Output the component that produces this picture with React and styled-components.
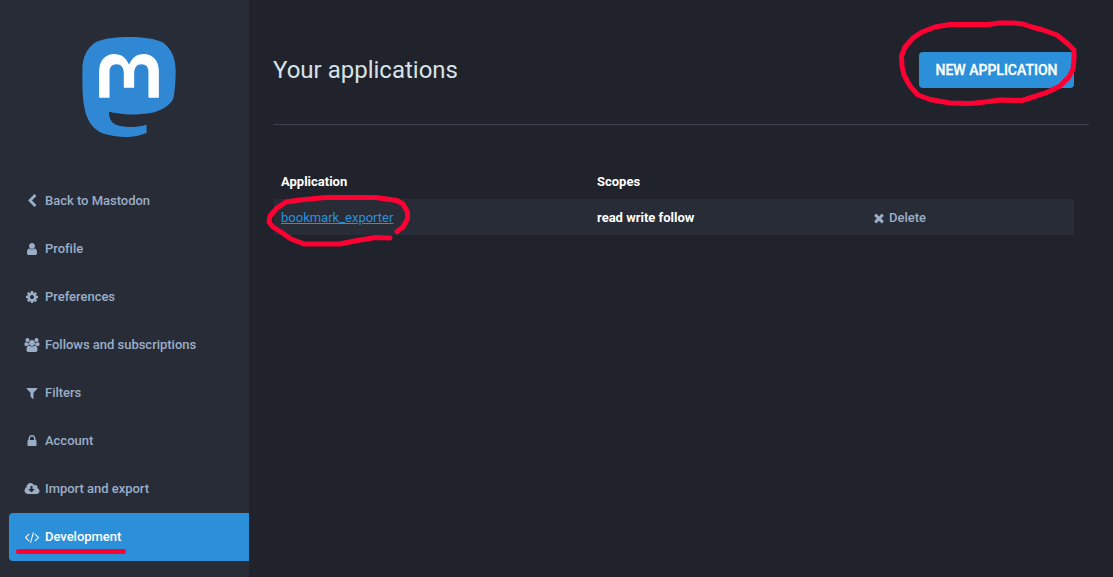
import React from "react";
import styled, { createGlobalStyle } from "styled-components";

const GlobalStyle = createGlobalStyle`
  * {
    box-sizing: border-box;
  }
  body {
    margin: 0;
    background: #20232b;
    font-family: Roboto, "Liberation Sans", sans-serif;
    font-size: 13px;
    line-height: 18px;
    color: #fff;
  }
`;

const Layout = styled.div`
  position: relative;
  display: flex;
  width: 1113px;
  height: 577px;
  overflow: hidden;
`;

const Sidebar = styled.aside`
  width: 249px;
  flex-shrink: 0;
  padding-top: 37px;
  background: #282c37;
`;

const Logo = styled.svg`
  display: block;
  width: 94px;
  height: 100px;
  margin: 0 auto 40px 82px;
`;

const Nav = styled.nav`
  display: flex;
  flex-direction: column;
  padding-left: 9px;
`;

const NavItem = styled.a`
  display: flex;
  align-items: center;
  gap: 6px;
  height: 48px;
  padding: 0 16px;
  border-radius: 4px 0 0 4px;
  font-weight: 500;
  letter-spacing: -0.02px;
  text-decoration: none;
  color: ${(props) => (props.$active ? "#fff" : "#9baec8")};
  background: ${(props) => (props.$active ? "#2b90d9" : "transparent")};
`;

const IconSvg = styled.svg`
  display: block;
  width: 14px;
  height: 14px;
  margin-bottom: 1px;
  flex-shrink: 0;
  overflow: visible;
  fill: currentColor;
`;

const Content = styled.main`
  flex: 1;
  padding: 52px 24px 0 25px;
`;

const Header = styled.header`
  display: flex;
  justify-content: space-between;
  height: 73px;
  padding-right: 15px;
  border-bottom: 1px solid #393f4f;
`;

const Title = styled.h2`
  margin: 0 0 0 -1px;
  font-size: 24px;
  line-height: 36px;
  font-weight: 400;
  color: #d9e1e8;
`;

const Button = styled.button`
  width: 155px;
  height: 36px;
  padding: 0;
  border: 0;
  border-radius: 4px;
  background: #2b90d9;
  color: #fff;
  font: 500 14px/36px Roboto, sans-serif;
  -webkit-text-stroke: 0.3px #fff;
  text-transform: uppercase;
`;

const Table = styled.div`
  width: 800px;
  margin-top: 38px;
`;

const Row = styled.div`
  display: grid;
  grid-template-columns: 316px 275px 1fr;
  align-items: center;
  height: 36px;
  padding: 2px 0 0 7px;
  font-weight: 700;
  background: ${(props) => (props.$filled ? "#282c37" : "transparent")};
`;

const AppLink = styled.a`
  font-weight: 400;
  color: #2b90d9;
  text-decoration: underline;
`;

const DeleteLink = styled.a`
  display: flex;
  align-items: center;
  gap: 3px;
  font-weight: 500;
  color: #9baec8;
`;

// hand drawn marks that lie over the page
const Marks = styled.svg`
  position: absolute;
  top: 0;
  left: 0;
  pointer-events: none;
  fill: none;
  stroke: #ff0033;
  stroke-width: 5;
  stroke-linecap: round;
  stroke-linejoin: round;
`;

const icons = {
  back: "M1427 301l-531 531 531 531q19 19 19 45t-19 45l-166 166q-19 19-45 19t-45-19l-742-742q-19-19-19-45t19-45l742-742q19-19 45-19t45 19l166 166q19 19 19 45t-19 45z",
  user: "M1536 1399q0 109-62.5 187t-150.5 78h-854q-88 0-150.5-78t-62.5-187q0-85 8.5-160.5t31.5-152 58.5-131 94-89 134.5-34.5q131 128 313 128t313-128q76 0 134.5 34.5t94 89 58.5 131 31.5 152 8.5 160.5zm-256-887q0 159-112.5 271.5t-271.5 112.5-271.5-112.5-112.5-271.5 112.5-271.5 271.5-112.5 271.5 112.5 112.5 271.5z",
  cog: "M1152 896q0-106-75-181t-181-75-181 75-75 181 75 181 181 75 181-75 75-181zm512-109v222q0 12-8 23t-20 13l-185 28q-19 54-39 91 35 50 107 138 10 12 10 25t-9 23q-27 37-99 108t-94 71q-12 0-26-9l-138-108q-44 23-91 38-16 136-29 186-7 28-36 28h-222q-14 0-24.5-8.5t-11.5-21.5l-28-184q-49-16-90-37l-141 107q-10 9-25 9-14 0-25-11-126-114-165-168-7-10-7-23 0-12 8-23 15-21 51-66.5t54-70.5q-27-50-41-99l-183-27q-13-2-21-12.5t-8-23.5v-222q0-12 8-23t19-13l186-28q14-46 39-92-40-57-107-138-10-12-10-24 0-10 9-23 26-36 98.5-107.5t94.5-71.5q13 0 26 10l138 107q44-23 91-38 16-136 29-186 7-28 36-28h222q14 0 24.5 8.5t11.5 21.5l28 184q49 16 90 37l142-107q9-9 24-9 13 0 25 10 129 119 165 170 7 8 7 22 0 12-8 23-15 21-51 66.5t-54 70.5q26 50 41 98l183 28q13 2 21 12.5t8 23.5z",
  users: "M529 896q-162 5-265 128h-134q-82 0-138-40.5t-56-118.5q0-353 124-353 6 0 43.5 21t97.5 42.5 119 21.5q67 0 133-23-5 37-5 66 0 139 81 256zm1071 637q0 120-73 189.5t-194 69.5h-874q-121 0-194-69.5t-73-189.5q0-53 3.5-103.5t14-109 26.5-108.5 43-97.5 62-81 85.5-53.5 111.5-20q10 0 43 21.5t73 48 107 48 135 21.5 135-21.5 107-48 73-48 43-21.5q61 0 111.5 20t85.5 53.5 62 81 43 97.5 26.5 108.5 14 109 3.5 103.5zm-1024-1277q0 106-75 181t-181 75-181-75-75-181 75-181 181-75 181 75 75 181zm704 384q0 159-112.5 271.5t-271.5 112.5-271.5-112.5-112.5-271.5 112.5-271.5 271.5-112.5 271.5 112.5 112.5 271.5zm576 225q0 78-56 118.5t-138 40.5h-134q-103-123-265-128 81-117 81-256 0-29-5-66 66 23 133 23 59 0 119-21.5t97.5-42.5 43.5-21q124 0 124 353zm-128-609q0 106-75 181t-181 75-181-75-75-181 75-181 181-75 181 75 75 181z",
  filter: "M1595 295q17 41-14 70l-493 493v742q0 42-39 59-13 5-25 5-27 0-45-19l-256-256q-19-19-19-45v-486l-493-493q-31-29-14-70 17-39 59-39h1280q42 0 59 39z",
  lock: "M640 768h512v-192q0-106-75-181t-181-75-181 75-75 181v192zm832 96v576q0 40-28 68t-68 28h-960q-40 0-68-28t-28-68v-576q0-40 28-68t68-28h32v-192q0-184 132-316t316-132 316 132 132 316v192h32q40 0 68 28t28 68z",
  cloud: "M1216 928q0-14-9-23t-23-9h-224v-352q0-13-9.5-22.5t-22.5-9.5h-192q-13 0-22.5 9.5t-9.5 22.5v352h-224q-13 0-22.5 9.5t-9.5 22.5q0 14 9 23l352 352q9 9 23 9t23-9l351-351q10-12 10-24zm640 224q0 159-112.5 271.5t-271.5 112.5h-1088q-185 0-316.5-131.5t-131.5-316.5q0-130 70-240t188-165q-2-30-2-43 0-212 150-362t362-150q156 0 285.5 87t188.5 231q71-62 166-62 106 0 181 75t75 181q0 76-41 138 130 31 213.5 135.5t83.5 238.5z",
  code: "M553 1399l-50 50q-10 10-23 10t-23-10l-466-466q-10-10-10-23t10-23l466-466q10-10 23-10t23 10l50 50q10 10 10 23t-10 23l-393 393 393 393q10 10 10 23t-10 23zm591-1067l-373 1291q-4 13-15.5 19.5t-23.5 2.5l-62-17q-13-4-19.5-15.5t-2.5-24.5l373-1291q4-13 15.5-19.5t23.5-2.5l62 17q13 4 19.5 15.5t2.5 24.5zm657 651l-466 466q-10 10-23 10t-23-10l-50-50q-10-10-10-23t10-23l393-393-393-393q-10-10-10-23t10-23l50-50q10-10 23-10t23 10l466 466q10 10 10 23t-10 23z",
  times: "M1490 1322q0 40-28 68l-136 136q-28 28-68 28t-68-28l-294-294-294 294q-28 28-68 28t-68-28l-136-136q-28-28-28-68t28-68l294-294-294-294q-28-28-28-68t28-68l136-136q28-28 68-28t68 28l294 294 294-294q28-28 68-28t68 28l136 136q28 28 28 68t-28 68l-294 294 294 294q28 28 28 68z",
};

const Icon = ({ name }) => (
  <IconSvg viewBox="0 0 1792 1792">
    <path d={icons[name]} />
  </IconSvg>
);

const navItems = [
  { icon: "back", label: "Back to Mastodon" },
  { icon: "user", label: "Profile" },
  { icon: "cog", label: "Preferences" },
  { icon: "users", label: "Follows and subscriptions" },
  { icon: "filter", label: "Filters" },
  { icon: "lock", label: "Account" },
  { icon: "cloud", label: "Import and export" },
  { icon: "code", label: "Development", active: true },
];

const MastodonLogo = () => (
  <Logo viewBox="0 0 216.4 232">
    <path
      fill="#3088d4"
      d="M211.80734 139.0875c-3.18125 16.36625-28.4925 34.2775-57.5625 37.74875-15.15875 1.80875-30.08375 3.47125-45.99875 2.74125-26.0275-1.1925-46.565-6.2125-46.565-6.2125 0 2.53375.15625 4.94625.46875 7.2025 3.38375 25.68625 25.47 27.225 46.39125 27.9425 21.11625.7225 39.91875-5.20625 39.91875-5.20625l.8675 19.09s-14.77 7.93125-41.08125 9.39c-14.50875.7975-32.52375-.365-53.50625-5.91875C9.23234 213.82 1.40609 165.31125.20859 116.09125c-.365-14.61375-.14-28.39375-.14-39.91875 0-50.33 32.97625-65.0825 32.97625-65.0825C49.67234 3.45375 78.20359.2425 107.86484 0h.72875c29.66125.2425 58.21125 3.45375 74.8375 11.09 0 0 32.975 14.7525 32.975 65.0825 0 0 .41375 37.13375-4.59875 62.915"
    />
    <path
      fill="#fff"
      d="M177.50984 80.077v60.94125h-24.14375v-59.15c0-12.46875-5.24625-18.7975-15.74-18.7975-11.6025 0-17.4175 7.5075-17.4175 22.3525v32.37625H96.20734V85.42325c0-14.845-5.81625-22.3525-17.41875-22.3525-10.49375 0-15.74 6.32875-15.74 18.7975v59.15H38.90484V80.077c0-12.455 3.17125-22.3525 9.54125-29.675 6.56875-7.3225 15.17125-11.07625 25.85-11.07625 12.355 0 21.71125 4.74875 27.8975 14.2475l6.01375 10.08125 6.015-10.08125c6.185-9.49875 15.54125-14.2475 27.8975-14.2475 10.6775 0 19.28 3.75375 25.85 11.07625 6.36875 7.3225 9.54 17.22 9.54 29.675"
    />
  </Logo>
);

const App = () => {
  return (
    <Layout>
      <GlobalStyle />
      <Sidebar>
        <MastodonLogo />
        <Nav>
          {navItems.map((item) => (
            <NavItem key={item.label} $active={item.active}>
              <Icon name={item.icon} />
              <span>{item.label}</span>
            </NavItem>
          ))}
        </Nav>
      </Sidebar>
      <Content>
        <Header>
          <Title>Your applications</Title>
          <Button>New application</Button>
        </Header>
        <Table>
          <Row>
            <span>Application</span>
            <span>Scopes</span>
          </Row>
          <Row $filled>
            <AppLink>bookmark_exporter</AppLink>
            <span>read write follow</span>
            <DeleteLink>
              <Icon name="times" />
              <span>Delete</span>
            </DeleteLink>
          </Row>
        </Table>
      </Content>
      <Marks width="1113" height="577" viewBox="0 0 1113 577">
        <path d="M1074 50L1068 44L1057 35L1043 30L1032 27L1023 24L1013 23L999 23L988 24.5L950 24.5L935 27L922 32L913 38L905 47L901.500 56L902 66L904 75L910 86L918 95L930 99.500L950 103L970 103.500L985 102L1000 100L1022 100.500L1033 97L1048 92L1060 86L1069 77L1073 69L1074 60Z" />
        <path d="M397 231.500L403 227L407.500 219L407.500 212L403 204L397 200.500L376 197.500L325 197.500L300 200L286 202L277 208L270 216L269 222L273 227L281 232L291 239L304 244L340 244L357 240.500L375 237.500L390 238" />
        <path d="M18.500 551.500L123.500 551.500" />
      </Marks>
    </Layout>
  );
};

export default App;
